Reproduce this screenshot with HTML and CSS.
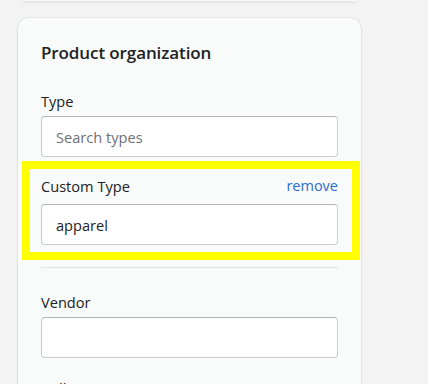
FILE: index.html
```html
<!DOCTYPE html>
<html lang="en">

<head>
    <meta charset="UTF-8">
    <meta name="viewport" content="width=device-width, initial-scale=1.0">
    <title>Product organization</title>
    <link rel="stylesheet" href="styles.css">
</head>

<body>

    <div class="page">
        <!-- bottom edge of the card above -->
        <div class="card-prev"></div>

        <!-- Product organization -->
        <div class="card">
            <h2 class="card-title">Product organization</h2>

            <div class="field">
                <label class="label" for="typeInput">Type</label>
                <input class="text-input" type="text" id="typeInput" placeholder="Search types">
            </div>

            <div class="highlight">
                <div class="label-row">
                    <label class="label" for="customType">Custom Type</label>
                    <a class="link" href="#">remove</a>
                </div>
                <input class="text-input" type="text" id="customType" value="apparel">
            </div>

            <hr class="divider">

            <div class="field">
                <label class="label" for="vendorInput">Vendor</label>
                <input class="text-input" type="text" id="vendorInput">
            </div>

            <div class="field field-spaced">
                <label class="label" for="collectionsInput">Collections</label>
                <input class="text-input" type="text" id="collectionsInput">
            </div>
        </div>
    </div>

</body>

</html>
```

FILE: styles.css
```css
* {
    margin: 0;
    padding: 0;
    box-sizing: border-box;
    font-family: 'Open Sans', 'Noto Sans', sans-serif;
}

body {
    background: #f3f3f3;
    color: #202223;
    font-size: 14.6px;
}

.page {
    width: 343px;
    margin-left: 18px;
}

.card-prev {
    height: 1px;
    margin: 0 4px;
    background: #f9fafa;
    border-radius: 0 0 8px 8px;
    box-shadow: 0 1px 3px rgba(0, 0, 0, 0.18);
}

.card {
    margin-top: 17px;
    background: #f9fafa;
    border-radius: 10px;
    box-shadow: 0 0 2px rgba(0, 0, 0, 0.15), 0 1px 2px rgba(0, 0, 0, 0.08);
    padding: 23px 23px 40px;
}

.card-title {
    font-size: 17px;
    font-weight: 600;
    line-height: 24px;
    letter-spacing: -0.1px;
}

.field {
    margin-top: 26px;
}

.field-spaced {
    margin-top: 20px;
}

.label {
    display: block;
    line-height: 20px;
    margin-bottom: 5px;
}

.text-input {
    display: block;
    width: 100%;
    height: 41px;
    padding: 0 14px;
    border: 1px solid #c9cccf;
    border-top-color: #aeb4b9;
    border-radius: 4px;
    background: #fff;
    color: #202223;
    font-size: 14.6px;
    outline: none;
}

.text-input::placeholder {
    color: #6d7175;
}

.highlight {
    margin: 4px -22px 0 -19px;
    border: 8px solid #ffff00;
    padding: 7px 14px 7px 11px;
}

.label-row {
    display: flex;
    justify-content: space-between;
    align-items: flex-end;
    margin-bottom: 8px;
}

.label-row .label {
    margin-bottom: 0;
}

.link {
    color: #2c6ecb;
    text-decoration: none;
    font-size: 14.5px;
    line-height: 20px;
}

.divider {
    border: none;
    border-top: 1px solid #e1e3e5;
    margin-top: 7px;
}

.divider + .field {
    margin-top: 24px;
}
```
